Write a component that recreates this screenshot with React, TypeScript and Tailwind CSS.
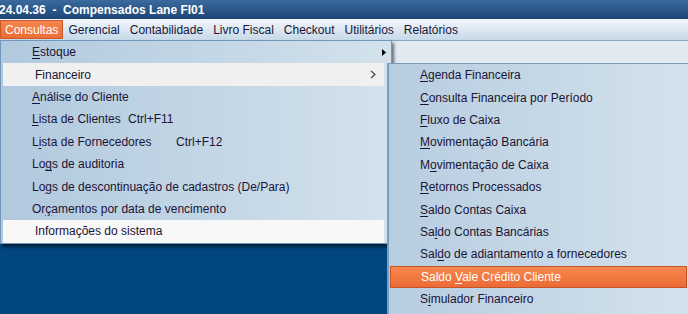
import { ReactNode } from 'react'

type Item = { label: string; u?: number; shortcut?: string }

const mainItems: Item[] = [
  { label: 'Estoque', u: 0 },
  { label: 'Financeiro' },
  { label: 'Análise do Cliente', u: 0 },
  { label: 'Lista de Clientes', u: 0, shortcut: 'Ctrl+F11' },
  { label: 'Lista de Fornecedores', u: 1, shortcut: 'Ctrl+F12' },
  { label: 'Logs de auditoria', u: 2 },
  { label: 'Logs de descontinuação de cadastros (De/Para)', u: 2 },
  { label: 'Orçamentos por data de vencimento', u: 2 },
  { label: 'Informações do sistema' },
]

const finItems: Item[] = [
  { label: 'Agenda Financeira', u: 0 },
  { label: 'Consulta Financeira por Período', u: 0 },
  { label: 'Fluxo de Caixa', u: 0 },
  { label: 'Movimentação Bancária', u: 0 },
  { label: 'Movimentação de Caixa', u: 1 },
  { label: 'Retornos Processados', u: 0 },
  { label: 'Saldo Contas Caixa', u: 0 },
  { label: 'Saldo Contas Bancárias', u: 2 },
  { label: 'Saldo de adiantamento a fornecedores', u: 3 },
  { label: 'Saldo Vale Crédito Cliente', u: 6 },
  { label: 'Simulador Financeiro', u: 1 },
]

const menuBar = ['Consultas', 'Gerencial', 'Contabilidade', 'Livro Fiscal', 'Checkout', 'Utilitários', 'Relatórios']

function Label({ text, u }: { text: string; u?: number }): ReactNode {
  if (u === undefined) return <span>{text}</span>
  return (
    <span>
      {text.slice(0, u)}
      <span className="underline underline-offset-2">{text[u]}</span>
      {text.slice(u + 1)}
    </span>
  )
}

export default function App() {
  return (
    <div className="relative h-[314px] w-[688px] overflow-hidden bg-[#00467f] font-['Liberation_Sans',Arial,sans-serif] text-[12px]">
      {/* Title bar */}
      <div className="flex h-[19px] items-center bg-gradient-to-b from-[#3b6a9e] to-[#1c4676] text-[12px] font-bold text-white">
        <span className="-ml-[1px] whitespace-pre">24.04.36  -  Compensados Lane Fl01</span>
      </div>

      {/* Menu bar */}
      <div className="flex h-[21px] items-center bg-gradient-to-b from-[#f3f7fb] to-[#c6d8e8] text-[#16163a]">
        {menuBar.map((m, i) => (
          <div
            key={m}
            className={
              i === 0
                ? 'flex h-[19px] items-center border border-[#c65a2b] bg-gradient-to-b from-[#f5864e] to-[#ec6c36] px-[4px] text-white'
                : 'flex h-[19px] items-center px-[5px]'
            }
          >
            {m}
          </div>
        ))}
      </div>

      {/* Toolbar strip */}
      <div className="h-[23px] border-t border-[#86a6c3] bg-[#e2eaf1]" />

      {/* Consultas dropdown */}
      <div className="absolute left-0 top-[40px] w-[392px] border border-[#7297ba] bg-gradient-to-r from-[#b1c9de] to-[#d3e2ec] pl-[2px] pr-[7px] text-[#1a1436] shadow-[2px_3px_3px_rgba(0,0,0,0.55)]">
        {mainItems.map((it, i) => {
          const hi = i === 1 || i === 8
          return (
            <div
              key={it.label}
              className={`relative flex h-[22.4px] items-center ${hi ? (i === 1 ? 'bg-[#f0f0f0] pl-[32px]' : 'bg-[#f8f8f8] pl-[32px]') : 'pl-[29px]'}`}
            >
              <Label text={it.label} u={it.u} />
              {it.shortcut && (
                <span className={`absolute ${i === 3 ? 'left-[125px]' : 'left-[173px]'}`}>{it.shortcut}</span>
              )}
              {i === 0 && (
                <svg className="absolute left-[379px] top-[8px]" width="4" height="7" viewBox="0 0 4 7">
                  <path d="M0 0 L4 3.5 L0 7 Z" fill="#000" />
                </svg>
              )}
              {i === 1 && (
                <svg className="absolute left-[367px] top-[7px]" width="6" height="9" viewBox="0 0 6 9">
                  <path d="M1 1 L5 4.5 L1 8" fill="none" stroke="#444" strokeWidth="1.2" />
                </svg>
              )}
            </div>
          )
        })}
      </div>

      {/* Financeiro submenu */}
      <div className="absolute left-[387px] top-[63px] w-[310px] border-l-2 border-t border-[#7a9dbf] bg-gradient-to-r from-[#b7cde0] to-[#d4e3ed] pb-[10px] pl-[1px] text-[#1a1436]">
        {finItems.map((it, i) => (
          <div
            key={it.label}
            className={`flex h-[22.4px] items-center pl-[30px] ${
              i === 9 ? 'mr-[10px] border border-[#c4552a] bg-gradient-to-b from-[#f7884f] to-[#ec6b36] pl-[29px] text-white' : ''
            }`}
          >
            <Label text={it.label} u={it.u} />
          </div>
        ))}
      </div>
    </div>
  )
}
